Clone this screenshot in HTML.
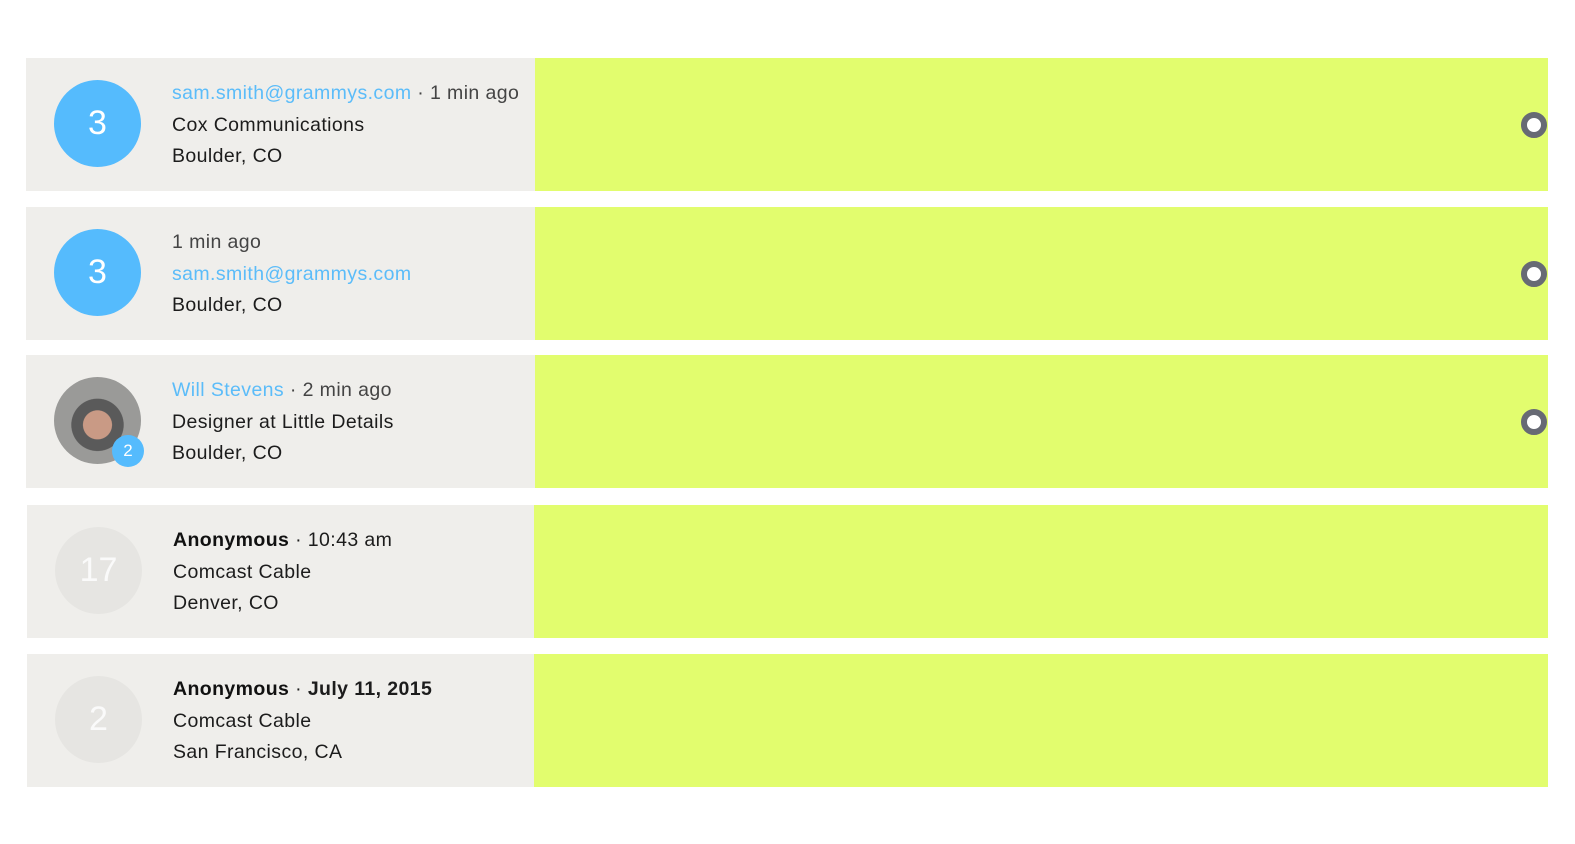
<!DOCTYPE html>
<html><head><style>
body{margin:0;background:#fff;width:1575px;height:844px;position:relative;font-family:"Liberation Sans",sans-serif;overflow:hidden}
.row{position:absolute;left:26px;width:1522px;height:133px;background:#efeeeb}
.g{position:absolute;left:509px;top:0;right:0;bottom:0;background:#e2fd6e}
.av{position:absolute;left:28px;top:22px;width:87px;height:87px;border-radius:50%;background:#55bbfd;color:#fff;font-size:34px;text-align:center;line-height:87px}
.av.an{background:#e6e5e2;color:#fafafa}
.t{position:absolute;left:146px;top:20px;font-size:19.5px;letter-spacing:0.4px;line-height:31.7px;color:#1c1c1c}
.b{color:#5bbcf9}.m{color:#444}
.dot{position:absolute;right:1px;top:54px;width:14px;height:14px;border:6px solid #676a74;border-radius:50%;background:#fff}
</style></head><body>
<div class="row" style="top:58px"><div class="g"></div><div class="av">3</div>
<div class="t"><span class="b">sam.smith@grammys.com</span><span class="m"> · 1 min ago</span><br>Cox Communications<br>Boulder, CO</div><div class="dot"></div></div>
<div class="row" style="top:207px"><div class="g"></div><div class="av">3</div>
<div class="t"><span class="m">1 min ago</span><br><span class="b">sam.smith@grammys.com</span><br>Boulder, CO</div><div class="dot"></div></div>
<div class="row" style="top:355px"><div class="g"></div>
<div class="av" style="background:radial-gradient(circle at 50% 55%,#c99a85 0 22%,#5a5a5a 23% 40%,#9a9a98 41%);"></div>
<div style="position:absolute;left:86px;top:80px;width:32px;height:32px;border-radius:50%;background:#55bbfd;color:#fff;font-size:17px;text-align:center;line-height:32px">2</div>
<div class="t"><span class="b">Will Stevens</span><span class="m"> · 2 min ago</span><br>Designer at Little Details<br>Boulder, CO</div><div class="dot"></div></div>
<div class="row" style="top:505px;left:27px;width:1521px"><div class="g" style="left:507px"></div><div class="av an">17</div>
<div class="t"><span style="font-weight:bold;color:#111">Anonymous</span> · 10:43 am<br>Comcast Cable<br>Denver, CO</div></div>
<div class="row" style="top:654px;left:27px;width:1521px"><div class="g" style="left:507px"></div><div class="av an">2</div>
<div class="t"><span style="font-weight:bold;color:#111">Anonymous</span> · <b>July 11, 2015</b><br>Comcast Cable<br>San Francisco, CA</div></div>
</body></html>
